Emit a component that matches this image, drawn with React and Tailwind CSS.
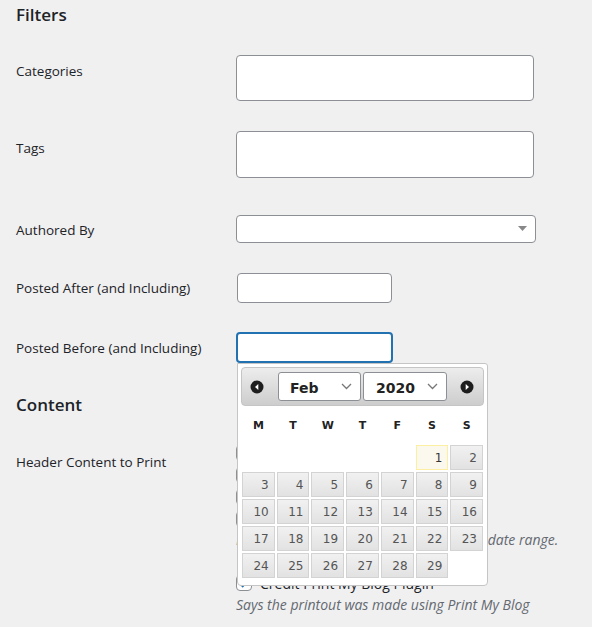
import React from 'react';

const font = { fontFamily: '"Open Sans", "Noto Sans", sans-serif' };

function Chevron() {
  return (
    <svg width="11" height="7" viewBox="0 0 11 7" className="shrink-0">
      <path d="M1 1l4.5 4.5L10 1" fill="none" stroke="#777" strokeWidth="1.3" />
    </svg>
  );
}

function CircleArrow({ dir }) {
  return (
    <svg width="14" height="14" viewBox="0 0 14 14" className="shrink-0">
      <circle cx="7" cy="7" r="6.5" fill="#1d1d1d" />
      {dir === 'prev' ? (
        <path d="M5 7l3.3-3v6z" fill="#fff" />
      ) : (
        <path d="M9 7l-3.3-3v6z" fill="#fff" />
      )}
    </svg>
  );
}

function DatePicker() {
  const cells = [null, null, null, null, null];
  for (let d = 1; d <= 29; d++) cells.push(d);

  return (
    <div
      className="absolute left-[1px] top-full z-10 w-[251px] h-[223px] bg-white border border-[#c5c5c5] rounded-b-[4px] rounded-tr-[3px] px-[3px] pt-[3px]"
      style={{ fontFamily: '"DejaVu Sans", Verdana, sans-serif' }}
    >
      {/* Header */}
      <div className="h-[39px] flex items-center rounded-[4px] border border-[#c5c5c5] bg-gradient-to-b from-[#ededed] to-[#cdcdcd] pl-[8px]">
        <CircleArrow dir="prev" />
        <div className="ml-[14px] w-[83px] h-[29px] flex items-center justify-between bg-white border border-[#8c8f94] rounded-[3px] pl-[11px] pr-[8px]">
          <span className="text-[14px] leading-[18px] pt-[2px] font-bold text-[#222]">Feb</span>
          <Chevron />
        </div>
        <div className="ml-[2px] w-[84px] h-[29px] flex items-center justify-between bg-white border border-[#8c8f94] rounded-[3px] pl-[12px] pr-[8px]">
          <span className="text-[14px] leading-[18px] pt-[2px] font-bold text-[#222]">2020</span>
          <Chevron />
        </div>
        <div className="ml-[13px]">
          <CircleArrow dir="next" />
        </div>
      </div>

      {/* Weekday headings */}
      <div className="grid grid-cols-7 gap-x-[2px] px-[1px] h-[39px] items-center">
        {['M', 'T', 'W', 'T', 'F', 'S', 'S'].map((d, i) => (
          <div key={i} className="text-center text-[11px] font-bold text-[#222] pt-[1px]">{d}</div>
        ))}
      </div>

      {/* Days */}
      <div className="grid grid-cols-7 gap-x-[2px] gap-y-[2px] px-[1px]">
        {cells.map((d, i) =>
          d === null ? (
            <div key={i} className="h-[25px]" />
          ) : d === 1 ? (
            <div key={i} className="h-[25px] flex items-center justify-end pr-[5px] text-[12px] text-[#363636] border border-[#fcefa1] bg-[#fbf9ee]">
              {d}
            </div>
          ) : (
            <div key={i} className="h-[25px] flex items-center justify-end pr-[5px] text-[12px] text-[#555] border border-[#d3d3d3] bg-gradient-to-b from-[#f1f1f1] to-[#e2e2e2]">
              {d}
            </div>
          )
        )}
      </div>
    </div>
  );
}

function Checkbox({ checked }) {
  return (
    <span className="w-4 h-4 shrink-0 rounded-[4px] border border-[#8c8f94] bg-white flex items-center justify-center">
      {checked && (
        <svg width="14" height="14" viewBox="0 0 14 14">
          <path d="M3 7.5l2.7 2.7L11 4" fill="none" stroke="#2271b1" strokeWidth="2" />
        </svg>
      )}
    </span>
  );
}

function CheckRow({ label, checked, tall }) {
  return (
    <label className={`flex items-center gap-2 text-[14px] text-[#1d2327] ${tall ? 'h-[24px]' : 'h-[22px]'}`}>
      <Checkbox checked={checked} />
      {label}
    </label>
  );
}

export default function App() {
  return (
    <div className="min-h-screen bg-[#f0f0f1] text-[#1d2327] overflow-hidden" style={font}>
      <h2 className="h-[30px] leading-[30px] pl-4 text-[17px] font-semibold">Filters</h2>

      {/* Categories */}
      <div className="flex h-[76px]">
        <div className="w-[236px] pl-4 pt-[31px] text-[13.5px] leading-[20px] font-medium">Categories</div>
        <div className="pt-[25px]">
          <div className="w-[298px] h-[46px] bg-white border border-[#8c8f94] rounded-[4px]" />
        </div>
      </div>

      {/* Tags */}
      <div className="flex h-[84px]">
        <div className="w-[236px] pl-4 pt-[32px] text-[13.5px] leading-[20px] font-medium">Tags</div>
        <div className="pt-[25px]">
          <div className="w-[298px] h-[47px] bg-white border border-[#8c8f94] rounded-[4px]" />
        </div>
      </div>

      {/* Authored By */}
      <div className="flex h-[68px]">
        <div className="w-[236px] pl-4 pt-[30px] text-[13.5px] leading-[20px] font-medium">Authored By</div>
        <div className="pt-[25px]">
          <div className="w-[300px] h-[28px] bg-white border border-[#8c8f94] rounded-[4px] flex items-center justify-end pr-[8px]">
            <svg width="9" height="6" viewBox="0 0 9 6">
              <path d="M0 0h9L4.5 5z" fill="#888" />
            </svg>
          </div>
        </div>
      </div>

      {/* Posted After */}
      <div className="flex h-[60px]">
        <div className="w-[236px] pl-4 pt-[20px] text-[13.5px] leading-[20px] font-medium">Posted After (and Including)</div>
        <div className="pt-[15px] pl-[1px]">
          <div className="w-[155px] h-[30px] bg-white border border-[#8c8f94] rounded-[4px]" />
        </div>
      </div>

      {/* Posted Before */}
      <div className="flex h-[60px] relative z-10">
        <div className="w-[236px] pl-4 pt-[20px] text-[13.5px] leading-[20px] font-medium">Posted Before (and Including)</div>
        <div className="pt-[14px]">
          <div className="relative">
            <div className="w-[157px] h-[31px] bg-white border-2 border-[#2271b1] rounded-[4px]" />
            <DatePicker />
          </div>
        </div>
      </div>

      <h2 className="h-[52px] pt-[17px] leading-[20px] pl-4 text-[17px] font-semibold">Content</h2>

      {/* Header Content to Print */}
      <div className="flex">
        <div className="w-[236px] pl-4 pt-[22px] text-[13.5px] leading-[20px] font-medium">Header Content to Print</div>
        <div className="pt-[12px]">
          <CheckRow label="Site Title" checked />
          <CheckRow label="Site Tagline" checked />
          <CheckRow label="Site URL" checked />
          <CheckRow label="Filters Used" checked />
          <p className="text-[14px] leading-[20px] italic text-[#646970]">Lists the filters used, such as category or date range.</p>
          <div className="pt-[21px]">
            <CheckRow label="Credit Print My Blog Plugin" checked tall />
          </div>
          <p className="text-[14px] leading-[20px] italic text-[#646970]">Says the printout was made using Print My Blog</p>
        </div>
      </div>
    </div>
  );
}
